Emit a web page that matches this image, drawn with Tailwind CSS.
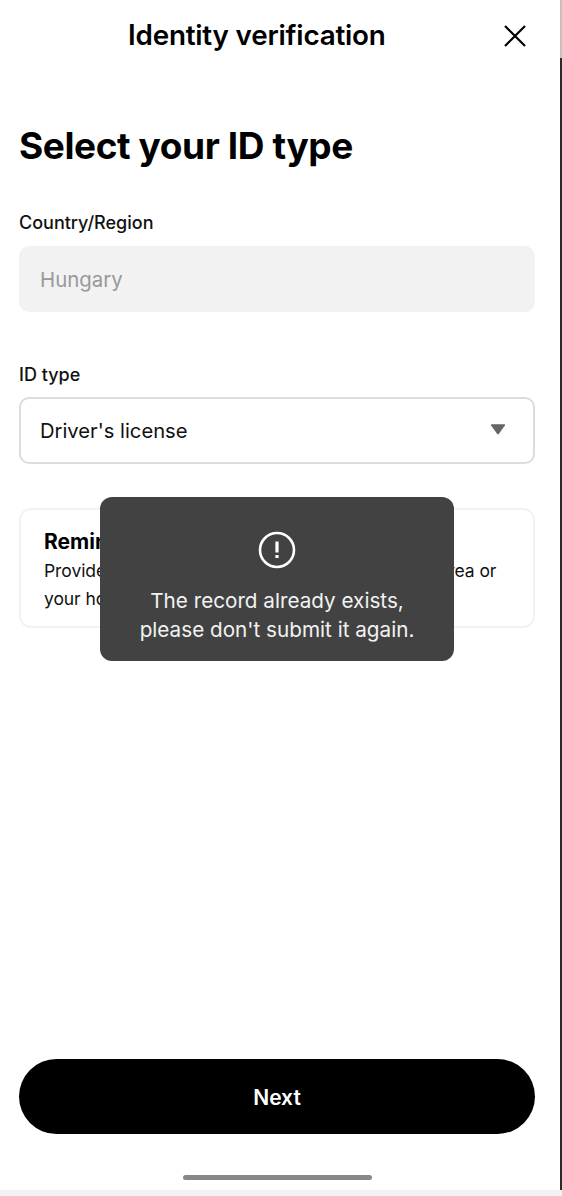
<!DOCTYPE html>
<html lang="en">
  <head>
    <meta charset="UTF-8" />
    <meta name="viewport" content="width=device-width, initial-scale=1.0" />
    <title>Identity verification</title>
    <script src="https://cdn.jsdelivr.net/npm/@tailwindcss/browser@4"></script>
  </head>
  <body class="bg-white">
    <div class="relative flex h-[1196px] w-[562px] flex-col overflow-hidden bg-white font-['Inter',sans-serif] text-black">
      <!-- window edge on the right -->
      <div class="absolute top-0 right-0 h-[58px] w-[2px] bg-[#c8c0ba]"></div>
      <div class="absolute top-[58px] right-0 bottom-[6px] w-[2px] bg-[#2b2b2b]"></div>

      <div class="flex h-[72px] shrink-0 items-center justify-between pr-[34px] pl-[128px]">
        <div class="text-[27.8px] font-semibold tracking-[-0.2px]">Identity verification</div>
        <svg class="h-[26px] w-[26px]" viewBox="0 0 26 26" fill="none" stroke="#000" stroke-width="2.2">
          <path d="M3 3L23 23M23 3L3 23" />
        </svg>
      </div>

      <div class="flex w-[535px] flex-1 flex-col pl-[19px]">
        <h1 class="mt-[50px] text-[37px] leading-[48px] font-bold tracking-[-0.4px]">Select your ID type</h1>

        <label class="mt-[41px] text-[18px] leading-[24px] font-medium text-[#111]">Country/Region</label>
        <div class="mt-[11px] flex h-[66px] items-center rounded-[10px] bg-[#f2f2f2] px-[21px] pt-[2px] text-[20.4px] text-[#999]">Hungary</div>

        <label class="mt-[51px] text-[18px] leading-[24px] font-medium text-[#111]">ID type</label>
        <div class="mt-[10px] flex h-[67px] items-center justify-between rounded-[10px] border-2 border-[#dcdcdc] pr-[27px] pl-[19px] text-[20.2px] text-[#111]">
          <span class="pt-[2px]">Driver's license</span>
          <svg class="mb-[2px] h-[11px] w-[16px]" viewBox="0 0 16 11" fill="#666"><path d="M1 1.2Q0.6 0.2 1.8 0.2H14.2Q15.4 0.2 15 1.2L9 9.8Q8 11 7 9.8Z" /></svg>
        </div>

        <div class="mt-[44px] h-[120px] rounded-[12px] border-2 border-[#f2f2f2] px-[23px] pt-[18px]">
          <div class="text-[21px] leading-[28px] font-bold">Reminder</div>
          <p class="mt-[1px] text-[17.5px] leading-[28px] tracking-[-0.07px] whitespace-nowrap text-[#111]">Provide the ID issued by your current residence area or</p>
          <p class="text-[17.5px] leading-[28px] tracking-[-0.07px] whitespace-nowrap text-[#111]">your home country.</p>
        </div>

        <div class="flex-1"></div>

        <button class="flex h-[75px] w-full items-center justify-center rounded-full bg-black pt-[2px] text-[21px] font-semibold text-white">Next</button>
        <div class="mx-auto mt-[41px] mb-[10px] h-[5px] w-[189px] rounded-full bg-[#888]"></div>
      </div>

      <div class="h-[6px] shrink-0 bg-[#f2f2f2]"></div>

      <!-- toast -->
      <div class="absolute top-[497px] left-[100px] flex h-[164px] w-[354px] flex-col items-center rounded-[12px] bg-[#424242] pt-[34px] text-white">
        <svg class="h-[38px] w-[38px]" viewBox="0 0 38 38" fill="none" stroke="#fff">
          <circle cx="19" cy="19" r="17" stroke-width="2.6" />
          <path d="M19 10.5V21.5" stroke-width="3.2" />
          <path d="M19 24V27" stroke-width="3.2" />
        </svg>
        <div class="mt-[17px] text-center text-[20.7px] leading-[29px] text-[#f2f2f2]">The record already exists,<br />please don't submit it again.</div>
      </div>
    </div>
  </body>
</html>
